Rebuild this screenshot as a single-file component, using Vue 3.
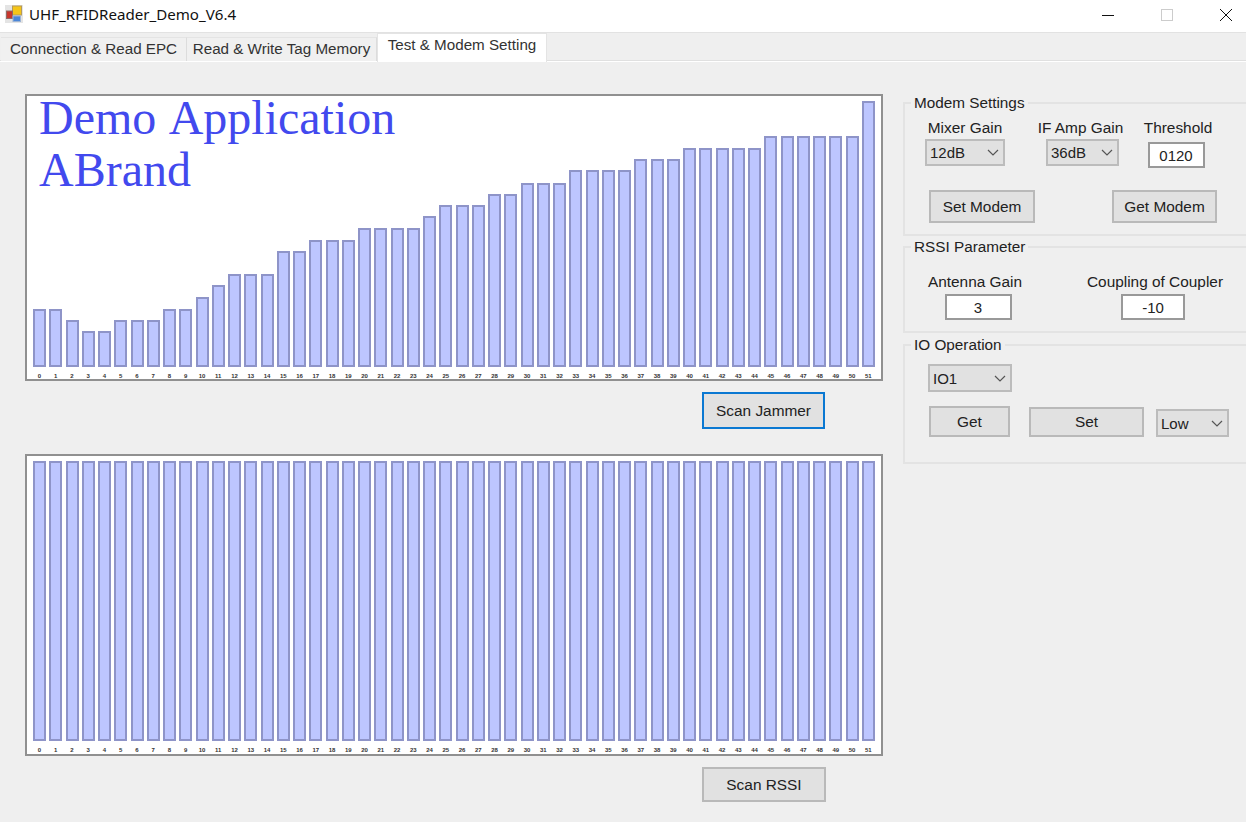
<script setup>
const tabs = ['Connection & Read EPC', 'Read & Write Tag Memory', 'Test & Modem Setting']

// bar heights in px, read off the jammer scan
const jammer = [
  58, 58, 47, 36, 36, 47, 47, 47, 58, 58, 70, 82, 93, 93, 93, 116, 116, 127, 127, 127,
  139, 139, 139, 139, 151, 162, 162, 162, 173, 173, 184, 184, 184, 197, 197, 197, 197,
  208, 208, 208, 219, 219, 219, 219, 219, 231, 231, 231, 231, 231, 231, 266
]
const rssi = new Array(52).fill(280)
</script>

<template>
  <div class="window">
    <div class="titlebar">
      <svg class="app-icon" width="18" height="18" viewBox="0 0 18 18">
        <rect x="0" y="0" width="18" height="18" fill="#e4e4e4" />
        <rect x="7.5" y="1" width="9" height="9" fill="#f5c518" stroke="#b59a5a" />
        <rect x="1.5" y="6" width="6" height="7.5" fill="#c8362c" stroke="#8f6a64" />
        <rect x="8" y="11" width="7.5" height="5.5" fill="#4a86d8" stroke="#9db4d4" />
      </svg>
      <span class="title">UHF_RFIDReader_Demo_V6.4</span>
      <div class="win-controls">
        <svg width="14" height="14" viewBox="0 0 14 14"><path d="M1 6.5h12" stroke="#111" fill="none" /></svg>
        <svg width="14" height="14" viewBox="0 0 14 14"><rect x="1.5" y="0.5" width="11" height="11" stroke="#ccc" fill="none" /></svg>
        <svg width="14" height="14" viewBox="0 0 14 14"><path d="M1 0l12 12M13 0L1 12" stroke="#111" fill="none" /></svg>
      </div>
    </div>

    <div class="tabstrip">
      <div
        v-for="(tab, i) in tabs"
        :key="tab"
        class="tab"
        :class="{ active: i === 2 }"
      >
        {{ tab }}
      </div>
    </div>

    <div class="page">
      <div class="left">
        <div class="chart jammer">
          <div class="chart-title">Demo Application<br />ABrand</div>
          <div class="bars">
            <div v-for="(h, i) in jammer" :key="i" class="col">
              <div class="bar" :style="{ height: h + 'px' }"></div>
              <div class="tick">{{ i }}</div>
            </div>
          </div>
        </div>
        <div class="scan-row first">
          <button class="btn scan focused">Scan Jammer</button>
        </div>

        <div class="chart rssi">
          <div class="bars">
            <div v-for="(h, i) in rssi" :key="i" class="col">
              <div class="bar" :style="{ height: h + 'px' }"></div>
              <div class="tick">{{ i }}</div>
            </div>
          </div>
        </div>
        <div class="scan-row second">
          <button class="btn scan">Scan RSSI</button>
        </div>
      </div>

      <div class="right">
        <fieldset class="group modem">
          <legend>Modem Settings</legend>
          <div class="modem-row">
            <div class="field mixer">
              <label>Mixer Gain</label>
              <div class="select">
                <span>12dB</span>
                <svg width="12" height="7" viewBox="0 0 12 7"><path d="M1 1l5 5 5-5" /></svg>
              </div>
            </div>
            <div class="field ifamp">
              <label>IF Amp Gain</label>
              <div class="select">
                <span>36dB</span>
                <svg width="12" height="7" viewBox="0 0 12 7"><path d="M1 1l5 5 5-5" /></svg>
              </div>
            </div>
            <div class="field threshold">
              <label>Threshold</label>
              <input class="text" value="0120" readonly />
            </div>
          </div>
          <div class="modem-buttons">
            <button class="btn set-modem">Set Modem</button>
            <button class="btn get-modem">Get Modem</button>
          </div>
        </fieldset>

        <fieldset class="group params">
          <legend>RSSI Parameter</legend>
          <div class="params-row">
            <div class="field antenna">
              <label>Antenna Gain</label>
              <input class="text" value="3" readonly />
            </div>
            <div class="field coupling">
              <label>Coupling of Coupler</label>
              <input class="text" value="-10" readonly />
            </div>
          </div>
        </fieldset>

        <fieldset class="group io">
          <legend>IO Operation</legend>
          <div class="select io-select">
            <span>IO1</span>
            <svg width="12" height="7" viewBox="0 0 12 7"><path d="M1 1l5 5 5-5" /></svg>
          </div>
          <div class="io-row">
            <button class="btn io-get">Get</button>
            <button class="btn io-set">Set</button>
            <div class="select io-level">
              <span>Low</span>
              <svg width="12" height="7" viewBox="0 0 12 7"><path d="M1 1l5 5 5-5" /></svg>
            </div>
          </div>
        </fieldset>
      </div>
    </div>
  </div>
</template>

<style>
html, body {
  margin: 0;
  overflow: hidden;
}
</style>

<style scoped>
.window {
  width: 1246px;
  height: 822px;
  display: flex;
  flex-direction: column;
  overflow: hidden;
  background: #efefef;
  font-family: "Liberation Sans", Arial, sans-serif;
  font-size: 15.4px;
  color: #222;
}

.titlebar {
  height: 32px;
  flex: none;
  box-sizing: border-box;
  display: flex;
  align-items: center;
  background: #fff;
  padding: 0 0 4px 5px;
}

.app-icon {
  margin-right: 6px;
}

.title {
  font-family: "Noto Sans", sans-serif;
  font-size: 15.1px;
  color: #111;
}

.win-controls {
  margin-left: auto;
  display: flex;
  gap: 45px;
  padding: 4px 13px 0 0;
}

.tabstrip {
  height: 30px;
  flex: none;
  box-sizing: border-box;
  display: flex;
  align-items: flex-end;
  padding-left: 1px;
  border-top: 1px solid #e2e2e2;
  border-bottom: 1px solid #fff;
  box-shadow: inset 0 -1px 0 #e0e0e0;
  background: #efefef;
}

.tab {
  height: 24px;
  box-sizing: border-box;
  width: 186px;
  padding-bottom: 3px;
  display: flex;
  align-items: center;
  justify-content: center;
  border-right: 1px solid #dcdcdc;
  border-top: 1px solid #e4e4e4;
  background: #f0f0f0;
  font-size: 15.2px;
  color: #333;
  white-space: nowrap;
}

.tab:nth-child(2) {
  width: 190px;
}

.tab.active {
  width: 170px;
  height: 29px;
  margin-bottom: -1px;
  background: #fff;
  border: 1px solid #e4e4e4;
  border-bottom: none;
  padding-bottom: 7px;
}

.page {
  flex: 1;
  display: flex;
  padding: 32px 0 0 25px;
  min-height: 0;
}

.left {
  width: 858px;
  flex: none;
}

.chart {
  position: relative;
  box-sizing: border-box;
  width: 858px;
  background: #fff;
  border: 2px solid #909090;
  padding: 0 0 0 6px;
  display: flex;
  align-items: flex-end;
}

.chart.jammer {
  height: 287px;
}

.chart.rssi {
  height: 302px;
}

.chart-title {
  position: absolute;
  left: 12px;
  top: -4px;
  font-family: "Liberation Serif", "Times New Roman", serif;
  font-size: 48px;
  line-height: 52px;
  word-spacing: 3px;
  color: #4249ee;
}

.bars {
  display: grid;
  grid-template-columns: repeat(52, 13px);
  column-gap: 3.25px;
  align-items: end;
}

.col {
  display: flex;
  flex-direction: column;
  align-items: center;
}

.bar {
  width: 13px;
  box-sizing: border-box;
  background: #bdc6ff;
  border: 2px solid #8e94c8;
}

.tick {
  height: 12px;
  font-size: 6px;
  font-weight: bold;
  line-height: 18px;
  color: #333;
  white-space: nowrap;
}

.chart.rssi .tick {
  height: 13px;
  line-height: 18px;
}

.scan-row {
  display: flex;
  justify-content: flex-end;
  padding-right: 57px;
}

.scan-row.first {
  margin: 11px 0 25px;
}

.scan-row.second {
  margin-top: 11px;
}

.btn {
  box-sizing: border-box;
  background: #e1e1e1;
  border: 2px solid #b9b9b9;
  padding: 0;
  font-family: inherit;
  font-size: 15.4px;
  color: #222;
}

.btn.scan {
  width: 124px;
  height: 35px;
}

.btn.focused {
  width: 123px;
  height: 37px;
  margin-right: 1px;
  border-color: #0a78d2;
}

.right {
  margin-left: 20px;
  flex: 1;
  margin-top: 1px;
  min-width: 0;
}

.group {
  box-sizing: border-box;
  margin: 0 -4px 0 0;
  padding: 0;
  border: 2px solid #e3e3e3;
  min-width: 0;
}

.group legend {
  margin-left: 6px;
  padding: 0 3px;
  font-size: 15.3px;
  line-height: 16px;
}

.group.modem {
  height: 141px;
}

.group.params {
  height: 94px;
  margin-top: 3px;
}

.group.io {
  height: 127px;
  margin-top: 4px;
}

.field {
  display: flex;
  flex-direction: column;
  align-items: center;
}

.field label {
  line-height: 16px;
  white-space: nowrap;
}

.select {
  box-sizing: border-box;
  height: 27px;
  display: flex;
  align-items: center;
  justify-content: space-between;
  background: #e1e1e1;
  border: 2px solid #bcbcbc;
  padding: 0 4px 0 3px;
  font-size: 15px;
}

.select svg {
  fill: none;
  stroke: #555;
  stroke-width: 1.2;
}

.text {
  box-sizing: border-box;
  display: block;
  height: 26px;
  background: #fff;
  border: 2px solid #999;
  outline: none;
  padding: 0;
  text-align: center;
  font-family: inherit;
  font-size: 15px;
  color: #222;
}

.modem-row {
  display: flex;
  align-items: flex-start;
  padding: 9px 0 0 20px;
}

.mixer {
  width: 80px;
}

.mixer .select {
  width: 80px;
  margin-top: 3px;
}

.ifamp {
  width: 83px;
  margin-left: 34px;
}

.ifamp .select {
  width: 73px;
  margin: 3px 0 0 4px;
}

.threshold {
  width: 70px;
  margin-left: 21px;
}

.threshold .text {
  width: 57px;
  margin: 6px 4px 0 0;
}

.modem-buttons {
  display: flex;
  padding: 22px 0 0 24px;
}

.btn.set-modem,
.btn.get-modem {
  height: 33px;
}

.btn.set-modem {
  width: 106px;
}

.btn.get-modem {
  width: 105px;
  margin-left: 77px;
}

.params-row {
  display: flex;
  padding: 19px 0 0 22px;
}

.antenna {
  width: 96px;
}

.antenna .text {
  width: 67px;
  margin: 4px 0 0 6px;
}

.coupling {
  width: 138px;
  margin-left: 63px;
}

.coupling .text {
  width: 64px;
  margin: 4px 4px 0 0;
}

.io-select {
  width: 84px;
  height: 28px;
  margin: 11px 0 0 23px;
}

.io-row {
  display: flex;
  align-items: flex-end;
  padding: 14px 0 0 24px;
}

.btn.io-get {
  width: 81px;
  height: 31px;
}

.btn.io-set {
  width: 115px;
  height: 30px;
  margin-left: 19px;
}

.io-level {
  width: 73px;
  height: 28px;
  margin-left: 12px;
}
</style>
